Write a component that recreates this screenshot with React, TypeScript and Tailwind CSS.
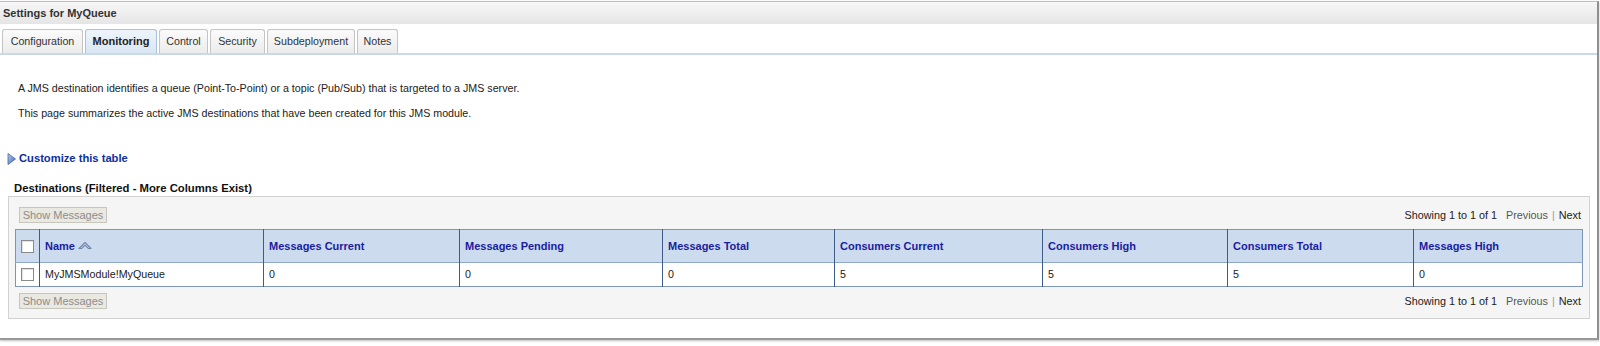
import React from 'react';

const tabs = [
  { label: 'Configuration', w: 'w-[81px]' },
  { label: 'Monitoring', w: 'w-[72px]', active: true },
  { label: 'Control', w: 'w-[49px]' },
  { label: 'Security', w: 'w-[55px]' },
  { label: 'Subdeployment', w: 'w-[88px]' },
  { label: 'Notes', w: 'w-[41px]' },
];

const columns = [
  { label: 'Messages Current', w: 'w-[196px]' },
  { label: 'Messages Pending', w: 'w-[203px]' },
  { label: 'Messages Total', w: 'w-[172px]' },
  { label: 'Consumers Current', w: 'w-[208px]' },
  { label: 'Consumers High', w: 'w-[185px]' },
  { label: 'Consumers Total', w: 'w-[186px]' },
  { label: 'Messages High', w: 'w-[169px]' },
];

const rowValues = ['0', '0', '0', '5', '5', '5', '0'];

function Checkbox() {
  return <span className="block w-[13px] h-[13px] border border-[#8a8a8a] bg-white shadow-[inset_1px_1px_1px_rgba(0,0,0,0.12)]" />;
}

function SortIcon() {
  return (
    <svg width="14" height="9" viewBox="0 0 14 9" className="inline-block ml-[3px] -mt-[2px]">
      <path d="M1 7.5 L7 1.5 L13 7.5 L10.5 7.5 L7 4 L3.5 7.5 Z" fill="#eef2f9" stroke="#6f84ab" strokeWidth="1.1" strokeLinejoin="round" />
    </svg>
  );
}

function ToolbarRow() {
  return (
    <div className="flex items-center justify-between pr-[1px]">
      <button className="h-[16px] w-[88px] border border-[#c6c6bd] bg-[#e9e9e2] text-[#8c8c8c] text-[11px] leading-[14px] font-['Liberation_Sans',Arial,sans-serif]">
        Show Messages
      </button>
      <div className="text-[10.8px] leading-[13px] text-[#222]">
        Showing 1 to 1 of 1
        <span className="ml-[9px] text-[#555]">Previous</span>
        <span className="mx-[4px] text-[#9a9a9a]">|</span>
        <span className="text-[#222]">Next</span>
      </div>
    </div>
  );
}

export default function App() {
  return (
    <div className="w-[1600px] h-[346px] bg-white overflow-hidden font-['Liberation_Sans',Arial,sans-serif] text-[10.7px] text-[#222]">
      <div className="mt-px w-[1599px] border-t border-[#bdbdbd] border-r-2 border-r-[#8f8f8f] border-b-2 border-b-[#999] shadow-[0_1px_2px_rgba(0,0,0,0.25)] pb-[19px]">
        {/* title bar */}
        <div className="h-[22px] bg-gradient-to-b from-[#f7f7f7] to-[#e5e5e5] flex items-center pl-[3px]">
          <span className="font-bold text-[11px] text-[#333] leading-[13px]">Settings for MyQueue</span>
        </div>

        {/* tabs */}
        <div className="pt-[5px] pl-[2px] flex gap-[2px] border-b-2 border-[#c9d9ea]">
          {tabs.map((t) => (
            <div
              key={t.label}
              className={`${t.w} h-[24px] rounded-t-[3px] border border-b-0 flex items-center justify-center leading-[13px] ${
                t.active
                  ? 'bg-gradient-to-b from-[#eef4fb] to-[#d9e6f3] border-[#a9c1dc] font-bold text-[11px] text-[#222]'
                  : 'bg-gradient-to-b from-[#fbfbfb] to-[#ececec] border-[#c4c4c4] text-[#333]'
              }`}
            >
              {t.label}
            </div>
          ))}
        </div>

        {/* description */}
        <p className="mt-[27px] pl-[18px] leading-[13px]">
          A JMS destination identifies a queue (Point-To-Point) or a topic (Pub/Sub) that is targeted to a JMS server.
        </p>
        <p className="mt-[12px] pl-[18px] leading-[13px]">
          This page summarizes the active JMS destinations that have been created for this JMS module.
        </p>

        {/* customize link */}
        <div className="mt-[32px] pl-[7px] flex items-center leading-[13px]">
          <svg width="9" height="12" viewBox="0 0 9 12" className="mr-[3px]">
            <defs>
              <linearGradient id="tri" x1="0" y1="0" x2="1" y2="1">
                <stop offset="0" stopColor="#b9cdf0" />
                <stop offset="1" stopColor="#3d64b4" />
              </linearGradient>
            </defs>
            <path d="M1 0.5 L8.5 6 L1 11.5 Z" fill="url(#tri)" stroke="#44679f" strokeWidth="0.8" />
          </svg>
          <span className="font-bold text-[11.2px] text-[#0d2fa0]">Customize this table</span>
        </div>

        {/* table section */}
        <div className="mt-[17px] pl-[14px] font-bold text-[11.3px] leading-[13px] text-[#111]">
          Destinations (Filtered - More Columns Exist)
        </div>

        <div className="mt-px ml-[8px] mr-[7px] border border-[#d2d2d2] bg-[#f5f5f5] pl-[6px] pr-[7px] pt-[10px] pb-[9px]">
          <div className="pl-[4px]">
            <ToolbarRow />
          </div>

          <table className="mt-[6px] w-[1567px] table-fixed border-collapse border border-[#7d95b8] bg-white">
            <thead>
              <tr className="h-[33px] bg-[#cddbef]">
                <th className="w-[24px] border-r border-[#3e5c8a] p-0">
                  <div className="flex justify-center">
                    <Checkbox />
                  </div>
                </th>
                <th className="w-[224px] border-r border-[#3e5c8a] px-[5px] text-left font-bold text-[11px] text-[#1a1d9e]">
                  Name
                  <SortIcon />
                </th>
                {columns.map((c, i) => (
                  <th
                    key={c.label}
                    className={`${c.w} ${i < columns.length - 1 ? 'border-r border-[#3e5c8a]' : ''} px-[5px] text-left font-bold text-[11px] text-[#1a1d9e]`}
                  >
                    {c.label}
                  </th>
                ))}
              </tr>
            </thead>
            <tbody>
              <tr className="h-[24px] border-t border-[#8ea6c7]">
                <td className="border-r border-[#3e5c8a] p-0">
                  <div className="flex justify-center">
                    <Checkbox />
                  </div>
                </td>
                <td className="border-r border-[#3e5c8a] px-[5px] text-[#222]">MyJMSModule!MyQueue</td>
                {rowValues.map((v, i) => (
                  <td
                    key={i}
                    className={`${i < rowValues.length - 1 ? 'border-r border-[#3e5c8a]' : ''} px-[5px] text-[#222]`}
                  >
                    {v}
                  </td>
                ))}
              </tr>
            </tbody>
          </table>

          <div className="mt-[6px] pl-[4px]">
            <ToolbarRow />
          </div>
        </div>
      </div>
    </div>
  );
}
